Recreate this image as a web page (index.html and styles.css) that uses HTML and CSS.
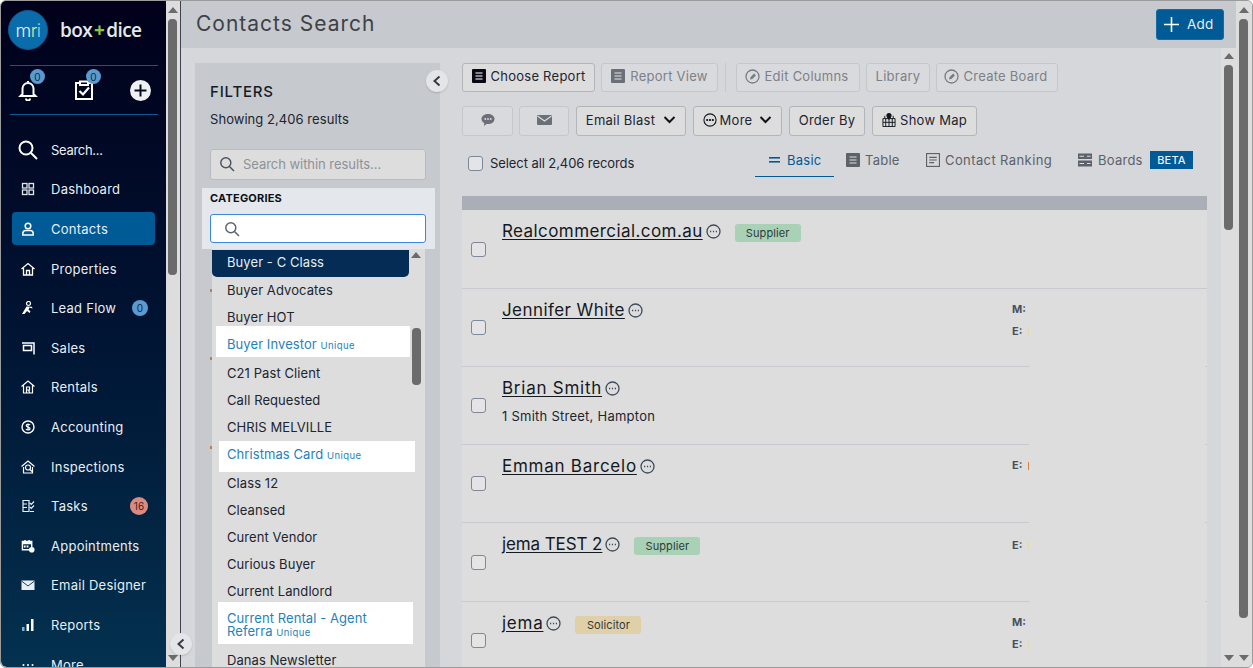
FILE: index.html
```html
<!DOCTYPE html>
<html lang="en">
<head>
<meta charset="utf-8">
<title>Contacts Search</title>
<link rel="stylesheet" href="styles.css">
</head>
<body>
<div class="window">
  <aside class="sidebar">
    <div class="brand">
      <div class="logo"><span class="logo-m">m</span><span class="logo-r">r</span><span class="logo-i">i</span></div>
      <div class="wordmark">box<span class="plus">+</span>dice</div>
    </div>
    <div class="quick">
      <div class="quick-item">
        <svg width="20" height="22" viewBox="0 0 20 22" fill="none" stroke="#fff" stroke-width="2"><path d="M10 2v1M4.500 15V9.500a5.500 5.500 0 0 1 11 0V15l2 2H2.500zM8 19.500a2 2 0 0 0 4 0"/></svg>
        <span class="badge quick-badge">0</span>
      </div>
      <div class="quick-item">
        <svg width="20" height="22" viewBox="0 0 20 22" fill="none" stroke="#fff" stroke-width="2"><path d="M6 4H2v16h16V4h-4M6 2.500h8V6H6z"/><path d="M5.500 12l3.500 3.500 6-7" stroke-width="2.200"/></svg>
        <span class="badge quick-badge">0</span>
      </div>
      <div class="quick-item">
        <svg width="21" height="21" viewBox="0 0 21 21"><circle cx="10.500" cy="10.500" r="10.500" fill="#eef0f2"/><path d="M10.500 4.500v12M4.500 10.500h12" stroke="#0a0a1e" stroke-width="2"/></svg>
      </div>
    </div>
    <nav class="nav">
      <a class="nav-item nav-search"><svg class="nav-icon big" viewBox="0 0 20 20" fill="none" stroke="#fff" stroke-width="2"><circle cx="8" cy="8" r="6.500"/><path d="M12.800 12.800L19 19"/></svg><span>Search...</span></a>
      <a class="nav-item"><svg class="nav-icon" viewBox="0 0 14 14" fill="none" stroke="#dfe6ec" stroke-width="1.300"><rect x="1.500" y="1.500" width="4.500" height="4.500"/><rect x="8" y="1.500" width="4.500" height="4.500"/><rect x="1.500" y="8" width="4.500" height="4.500"/><rect x="8" y="8" width="4.500" height="4.500"/></svg><span>Dashboard</span></a>
      <a class="nav-item active"><svg class="nav-icon" viewBox="0 0 14 14" fill="none" stroke="#fff" stroke-width="1.500"><circle cx="7" cy="4" r="2.800"/><path d="M1.800 13v-1.500A3 3 0 0 1 4.800 8.500h4.400a3 3 0 0 1 3 3V13z"/></svg><span>Contacts</span></a>
      <a class="nav-item"><svg class="nav-icon" viewBox="0 0 14 14" fill="none" stroke="#fff" stroke-width="1.300"><path d="M0.500 7L7 1.500 13.500 7M2.500 6v7h9V6M5.500 13V8.500h3V13"/></svg><span>Properties</span></a>
      <a class="nav-item"><svg class="nav-icon" viewBox="0 0 14 14"><circle cx="7.500" cy="2.500" r="2" fill="none" stroke="#fff" stroke-width="1.200"/><path d="M5.500 5.500L1 13h2.500l2.500-3 2.500 2 1-1.500-2-2 1-2 3 1-.5-1.800z" fill="#fff"/></svg><span>Lead Flow</span><span class="badge nav-badge">0</span></a>
      <a class="nav-item"><svg class="nav-icon" viewBox="0 0 14 14" fill="none" stroke="#fff" stroke-width="1.500"><path d="M1 2h12v11.500M2.500 4.500h8v5h-8z"/></svg><span>Sales</span></a>
      <a class="nav-item"><svg class="nav-icon" viewBox="0 0 14 14" fill="none" stroke="#fff" stroke-width="1.200"><path d="M0.500 6.500L7 1l6.500 5.500M2.500 5.500V13h9V5.500M5.500 13V7h3v3h-3M7.500 10l1.200 3"/></svg><span>Rentals</span></a>
      <a class="nav-item"><svg class="nav-icon" viewBox="0 0 14 14"><circle cx="7" cy="7" r="6" fill="none" stroke="#fff" stroke-width="1.400"/><path d="M9 5c-.5-1-3.800-1.200-3.800.5S9 7 9 8.700 5.500 10 5 9M7 3.500v7" fill="none" stroke="#fff" stroke-width="1.200"/></svg><span>Accounting</span></a>
      <a class="nav-item"><svg class="nav-icon" viewBox="0 0 14 14" fill="none" stroke="#fff" stroke-width="1.200"><path d="M0.500 6.500L7 1l6.500 5.500M2.500 7v6h9V7"/><circle cx="7" cy="7.500" r="2.500"/><path d="M9 9.500l2 2"/></svg><span>Inspections</span></a>
      <a class="nav-item"><svg class="nav-icon" viewBox="0 0 14 14" fill="none" stroke="#e6f0f5" stroke-width="1.200"><path d="M2 1.500h6v11H2zM2 5h4M2 8.500h4M9 4l1.300 1.300L13 2.500M9 8l1.300 1.300L13 6.500M9 12.500h4"/></svg><span>Tasks</span><span class="badge task-badge">16</span></a>
      <a class="nav-item"><svg class="nav-icon" viewBox="0 0 15 15"><path d="M1.500 2.500h10v9h-10z" fill="none" stroke="#fff" stroke-width="1.500"/><path d="M1.500 3h10v2.500h-10zM3.500 1h1.500v2H3.500zM8 1h1.500v2H8zM3 7h2v2H3zM6 7h2v2H6z" fill="#fff"/><circle cx="11.500" cy="11.500" r="3" fill="#fff"/></svg><span>Appointments</span></a>
      <a class="nav-item"><svg class="nav-icon" viewBox="0 0 14 14"><path d="M0.500 2.500h13v9.500H0.500z" fill="#e8eef2"/><path d="M0.500 3l6.500 5 6.500-5" fill="none" stroke="#1a4560" stroke-width="1"/></svg><span>Email Designer</span></a>
      <a class="nav-item"><svg class="nav-icon" viewBox="0 0 14 14" fill="#fff"><rect x="1" y="9" width="2.500" height="4" fill="#6cb5e0"/><rect x="5.500" y="6" width="2.500" height="7"/><rect x="10" y="1" width="2.500" height="12"/></svg><span>Reports</span></a>
      <a class="nav-item"><svg class="nav-icon" viewBox="0 0 14 14" fill="#fff"><circle cx="2.500" cy="7" r="1"/><circle cx="7" cy="7" r="1"/><circle cx="11.500" cy="7" r="1"/></svg><span>More</span></a>
    </nav>
  </aside>
  <div class="track side-track">
    <i class="arrow up"></i><i class="thumb side-thumb"></i><i class="arrow down push"></i>
  </div>
  <button class="collapse side-collapse" aria-label="Collapse"><svg width="10" height="12" viewBox="0 0 10 12" fill="none" stroke="#333c48" stroke-width="2"><path d="M7.500 1.500L2.500 6l5 4.500"/></svg></button>

  <main class="main">
    <header class="page-head">
      <h1>Contacts Search</h1>
      <button class="add"><svg width="15" height="15" viewBox="0 0 15 15" stroke="#fff" stroke-width="1.600"><path d="M7.500 0v15M0 7.500h15"/></svg><span>Add</span></button>
    </header>
    <div class="content">
      <section class="filters">
        <button class="collapse filter-collapse" aria-label="Collapse"><svg width="10" height="12" viewBox="0 0 10 12" fill="none" stroke="#333c48" stroke-width="2"><path d="M7.500 1.500L2.500 6l5 4.500"/></svg></button>
        <h2>FILTERS</h2>
        <p class="count">Showing 2,406 results</p>
        <div class="search-box">
          <svg width="16" height="16" viewBox="0 0 16 16" fill="none" stroke="#4b5563" stroke-width="1.500"><circle cx="6.800" cy="6.800" r="5"/><path d="M10.500 10.500L15 15"/></svg>
          <span>Search within results...</span>
        </div>
        <div class="cat-head">
          <div class="cat-label">CATEGORIES</div>
          <div class="cat-input"><svg width="16" height="16" viewBox="0 0 16 16" fill="none" stroke="#5a6470" stroke-width="1.500"><circle cx="6.800" cy="6.800" r="5"/><path d="M10.500 10.500L15 15"/></svg></div>
        </div>
        <div class="cat-list">
          <div class="cat-selected">Buyer - C Class</div>
          <div class="cat">Buyer Advocates</div>
          <div class="cat">Buyer HOT</div>
          <div class="cat hi hi-investor">Buyer Investor <small>Unique</small></div>
          <div class="cat">C21 Past Client</div>
          <div class="cat">Call Requested</div>
          <div class="cat">CHRIS MELVILLE</div>
          <div class="cat hi hi-card">Christmas Card <small>Unique</small></div>
          <div class="cat">Class 12</div>
          <div class="cat">Cleansed</div>
          <div class="cat">Curent Vendor</div>
          <div class="cat">Curious Buyer</div>
          <div class="cat">Current Landlord</div>
          <div class="cat hi hi-rental">Current Rental - Agent Referra <small>Unique</small></div>
          <div class="cat">Danas Newsletter</div>
          <i class="arrow up list-up"></i><i class="thumb list-thumb"></i>
        </div>
        <i class="speck speck-a"></i><i class="speck speck-b"></i><i class="speck speck-c"></i>
      </section>

      <section class="results">
        <div class="tools tools-one">
          <button class="btn b-choose"><svg class="sq" viewBox="0 0 14 14"><rect width="14" height="14" rx="1" fill="#0a0a14"/><path d="M3.500 4h7M3.500 7h7M3.500 10h7" stroke="#fff" stroke-width="1.200"/></svg>Choose Report</button>
          <button class="btn off b-view"><svg class="sq" viewBox="0 0 14 14"><rect width="14" height="14" rx="1" fill="#6b7078"/><path d="M3.500 4h7M3.500 7h7M3.500 10h7" stroke="#e4e4e4" stroke-width="1.200"/></svg>Report View</button>
          <i class="sep"></i>
          <button class="btn off b-edit"><svg class="sq circ" viewBox="0 0 15 15" fill="none" stroke="#777c84" stroke-width="1.300"><circle cx="7.500" cy="7.500" r="6.500"/><path d="M5 10.500l.6-2.400 3.500-3.500 1.800 1.800-3.500 3.500z" fill="#777c84" stroke="none"/></svg>Edit Columns</button>
          <button class="btn off b-library">Library</button>
          <button class="btn off b-board"><svg class="sq circ" viewBox="0 0 15 15" fill="none" stroke="#777c84" stroke-width="1.300"><circle cx="7.500" cy="7.500" r="6.500"/><path d="M5 10.500l.6-2.400 3.500-3.500 1.800 1.800-3.500 3.500z" fill="#777c84" stroke="none"/></svg>Create Board</button>
        </div>
        <div class="tools tools-two">
          <button class="btn off b-chat" aria-label="Comment"><svg width="14" height="14" viewBox="0 0 14 14"><path d="M7 1c3.500 0 6.500 2 6.500 5S10.500 11 7 11c-.6 0-1 0-1.500-.1L3 13l.2-3C1.500 9.200.5 7.800.5 6 .5 3 3.500 1 7 1z" fill="#6b7078"/><circle cx="4.300" cy="6" r=".9" fill="#ddd"/><circle cx="7" cy="6" r=".9" fill="#ddd"/><circle cx="9.700" cy="6" r=".9" fill="#ddd"/></svg></button>
          <button class="btn off b-mail" aria-label="Email"><svg width="15" height="12" viewBox="0 0 15 12"><rect y="1" width="15" height="10" rx="1" fill="#6b7078"/><path d="M.5 2l7 5 7-5" fill="none" stroke="#ddd" stroke-width="1.100"/></svg></button>
          <button class="btn b-blast">Email Blast<svg class="chev" viewBox="0 0 12 8" fill="none" stroke="#10151c" stroke-width="2"><path d="M1 1l5 5 5-5"/></svg></button>
          <button class="btn b-more"><svg class="sq" viewBox="0 0 15 15" fill="none" stroke="#10151c" stroke-width="1.200"><circle cx="7.500" cy="7.500" r="6.500"/><circle cx="4.500" cy="7.500" r=".6" fill="#10151c"/><circle cx="7.500" cy="7.500" r=".6" fill="#10151c"/><circle cx="10.500" cy="7.500" r=".6" fill="#10151c"/></svg>More<svg class="chev" viewBox="0 0 12 8" fill="none" stroke="#10151c" stroke-width="2"><path d="M1 1l5 5 5-5"/></svg></button>
          <button class="btn b-order">Order By</button>
          <button class="btn b-map"><svg class="sq" viewBox="0 0 15 15" fill="none" stroke="#10151c" stroke-width="1"><path d="M1 6h13v8.500H1zM1 10h13M4 6v8.500M7.500 6v8.500M11 6v8.500M3 6V3M12 6V3"/><path d="M7.500 0a2.800 2.800 0 0 1 2.800 2.800C10.300 4.800 7.500 7.500 7.500 7.500S4.700 4.800 4.700 2.800A2.800 2.800 0 0 1 7.500 0z" fill="#10151c" stroke="none"/></svg>Show Map</button>
        </div>
        <div class="select-row">
          <label class="select-all"><i class="check"></i>Select all 2,406 records</label>
          <div class="tabs">
            <a class="tab t-basic active"><svg class="tab-icon small" viewBox="0 0 11 6" fill="#005a96"><rect width="11" height="1.600"/><rect y="4" width="11" height="1.600"/></svg>Basic</a>
            <a class="tab t-table"><svg class="tab-icon" viewBox="0 0 14 14"><rect width="14" height="14" rx="1" fill="#5d6168"/><path d="M3.500 4h7M3.500 7h7M3.500 10h7" stroke="#ddd" stroke-width="1.100"/></svg>Table</a>
            <a class="tab t-rank"><svg class="tab-icon" viewBox="0 0 13 13" fill="none" stroke="#5d6168" stroke-width="1.100"><rect x=".5" y=".5" width="12" height="12"/><path d="M3 4h7M3 6.500h7M3 9h4.500"/></svg>Contact Ranking</a>
            <a class="tab t-boards"><svg class="tab-icon" viewBox="0 0 14 13"><path d="M0 0h14v5.500H0zM0 7h14v6H0z" fill="#5d6168"/><path d="M1.500 2.700H6M9 2.700h3.500M1.500 10H6M9 10h3.500" stroke="#ddd" stroke-width="1.100"/></svg>Boards<b class="beta">BETA</b></a>
          </div>
        </div>
        <div class="grey-bar"></div>
        <div class="rows">
          <article class="row row-tall">
            <i class="check"></i>
            <div class="row-main">
              <div class="name-line"><a class="name">Realcommercial.com.au</a><svg class="dots" viewBox="0 0 15 15" fill="none" stroke="#3f4c5c" stroke-width="1.300"><circle cx="7.500" cy="7.500" r="6.500"/><path d="M4 7.500h1.200M6.900 7.500h1.200M9.800 7.500H11" stroke-width="1.400"/></svg><span class="tag green">Supplier</span></div>
            </div>
            <div class="row-fields"></div>
          </article>
          <article class="row">
            <i class="check"></i>
            <div class="row-main">
              <div class="name-line"><a class="name">Jennifer White</a><svg class="dots" viewBox="0 0 15 15" fill="none" stroke="#3f4c5c" stroke-width="1.300"><circle cx="7.500" cy="7.500" r="6.500"/><path d="M4 7.500h1.200M6.900 7.500h1.200M9.800 7.500H11" stroke-width="1.400"/></svg></div>
            </div>
            <div class="row-fields"><div class="field">M:</div><div class="field">E:<i class="mark pale"></i></div></div>
          </article>
          <article class="row">
            <i class="check"></i>
            <div class="row-main">
              <div class="name-line"><a class="name name-wide">Brian Smith</a><svg class="dots" viewBox="0 0 15 15" fill="none" stroke="#3f4c5c" stroke-width="1.300"><circle cx="7.500" cy="7.500" r="6.500"/><path d="M4 7.500h1.200M6.900 7.500h1.200M9.800 7.500H11" stroke-width="1.400"/></svg></div>
              <p class="address">1 Smith Street, Hampton</p>
            </div>
            <div class="row-fields"></div>
          </article>
          <article class="row">
            <i class="check"></i>
            <div class="row-main">
              <div class="name-line"><a class="name name-wide">Emman Barcelo</a><svg class="dots" viewBox="0 0 15 15" fill="none" stroke="#3f4c5c" stroke-width="1.300"><circle cx="7.500" cy="7.500" r="6.500"/><path d="M4 7.500h1.200M6.900 7.500h1.200M9.800 7.500H11" stroke-width="1.400"/></svg></div>
            </div>
            <div class="row-fields"><div class="field">E:<i class="mark strong"></i></div></div>
          </article>
          <article class="row row-tall">
            <i class="check"></i>
            <div class="row-main">
              <div class="name-line"><a class="name name-tight">jema TEST 2</a><svg class="dots" viewBox="0 0 15 15" fill="none" stroke="#3f4c5c" stroke-width="1.300"><circle cx="7.500" cy="7.500" r="6.500"/><path d="M4 7.500h1.200M6.900 7.500h1.200M9.800 7.500H11" stroke-width="1.400"/></svg><span class="tag green">Supplier</span></div>
            </div>
            <div class="row-fields row-fields-low"><div class="field">E:<i class="mark pale"></i></div></div>
          </article>
          <article class="row">
            <i class="check"></i>
            <div class="row-main">
              <div class="name-line"><a class="name name-wide">jema</a><svg class="dots" viewBox="0 0 15 15" fill="none" stroke="#3f4c5c" stroke-width="1.300"><circle cx="7.500" cy="7.500" r="6.500"/><path d="M4 7.500h1.200M6.900 7.500h1.200M9.800 7.500H11" stroke-width="1.400"/></svg><span class="tag sand">Solicitor</span></div>
            </div>
            <div class="row-fields"><div class="field">M:</div><div class="field">E:<i class="mark pale"></i></div></div>
          </article>
        </div>
        <div class="row-mask"></div>
      </section>

      <div class="track inner-track">
        <i class="arrow up"></i><i class="thumb inner-thumb"></i><i class="arrow down push"></i>
      </div>
    </div>
  </main>
  <div class="track outer-track">
    <i class="arrow up"></i><i class="thumb outer-thumb"></i><i class="arrow down push"></i>
  </div>
</div>
</body>
</html>
```

FILE: styles.css
```css
* { box-sizing: border-box; }
html, body { margin: 0; height: 100%; overflow: hidden; }
body { font-family: "Inter", "Liberation Sans", sans-serif; font-size: 13px; letter-spacing: .25px; color: #1c2530; }
svg { display: block; flex: none; }
i { display: block; }
button { font: inherit; letter-spacing: inherit; }

.window { position: relative; display: flex; width: 1253px; height: 668px; border: 1px solid #9b9b9b; border-radius: 6px; overflow: hidden; background: #d5d7db; }

/* sidebar */
.sidebar { width: 165px; flex: none; height: 100%; overflow: hidden; background: linear-gradient(#00001a, #001433 50%, #03314f); color: #e8eef3; border-bottom-left-radius: 6px; }
.brand { display: flex; align-items: flex-start; height: 64px; padding: 9px 0 0 7px; }
.logo { width: 40px; height: 40px; border-radius: 50%; background: #0b6cab; border: 1px solid #12588a; display: flex; align-items: center; justify-content: center; font-size: 18px; font-weight: 300; color: #e6f1f8; letter-spacing: -.4px; }
.logo-r { color: #d6e7a4; }
.logo-i { color: #9ad6ec; }
.wordmark { margin-left: 12px; font-family: "Open Sans", sans-serif; font-weight: 600; font-size: 19px; line-height: 40px; letter-spacing: -.6px; color: #e6e8ea; }
.plus { color: #8dc63f; font-weight: 700; margin: 0 2px; }
.quick { display: flex; align-items: center; justify-content: space-between; height: 50px; margin: 0 8px 0 9px; padding: 0 7px 0 8px; border-top: 1px solid #0b5a94; border-bottom: 1px solid #0b5a94; }
.quick-item { position: relative; }
.badge { display: flex; align-items: center; justify-content: center; border-radius: 50%; background: #5b9ad0; color: #0e2a44; font-size: 10px; letter-spacing: 0; }
.quick-badge { position: absolute; top: -10px; left: 12px; width: 15px; height: 15px; }
.nav { padding: 18.300px 11px 0 11px; }
.nav-item { display: flex; align-items: center; height: 33px; margin-bottom: 6.600px; padding: 0 8px 0 9px; border-radius: 4px; font-size: 13px; }
.nav-item > span:first-of-type { margin-left: 16px; }
.nav-search { letter-spacing: -.3px; }
.nav-icon { width: 14px; height: 14px; }
.nav-icon.big { width: 20px; height: 20px; margin: 0 -3px 0 -3px; }
.nav-item.active { background: #005a96; }
.nav-badge { width: 16px; height: 16px; margin-left: auto; margin-right: -1px; }
.task-badge { width: 18px; height: 18px; margin-left: auto; margin-right: -1px; background: #d98b80; color: #4a1c14; }

/* scrollbars */
.track { display: flex; flex-direction: column; align-items: center; flex: none; background: #dddddd; }
.side-track { width: 15px; height: 100%; padding: 6px 1px 6px 0; border-right: 1px solid #3d4450; }
.outer-track { width: 16px; padding: 6px 1px 6px 0; }
.inner-track { width: 15px; padding: 5px 0 6px; }
.arrow { width: 0; height: 0; border-left: 5px solid transparent; border-right: 5px solid transparent; flex: none; }
.arrow.up { border-bottom: 6px solid #6b6b6b; }
.arrow.down { border-top: 6px solid #6b6b6b; }
.push { margin-top: auto; }
.thumb { width: 9px; background: #6b6b6b; border-radius: 4px; flex: none; margin-top: 6px; }
.side-thumb { height: 256px; }
.outer-thumb { height: 599px; }
.inner-thumb { height: 165px; margin-top: 6px; }

.collapse { display: flex; align-items: center; justify-content: center; position: absolute; width: 22px; height: 22px; padding: 0; border: 0; border-radius: 50%; background: #e3e5e8; box-shadow: 0 1px 2px rgba(0,0,0,.15); z-index: 5; }
.side-collapse { left: 169px; top: 632px; }
.filter-collapse { left: 231px; top: 7px; }

/* main */
.main { flex: 1; min-width: 0; display: flex; flex-direction: column; }
.page-head { display: flex; align-items: center; justify-content: space-between; flex: none; height: 47px; padding: 0 12px 0 15px; background: #c6c9ce; }
h1 { margin: 0 0 3px; font-size: 21px; font-weight: 400; letter-spacing: 1px; color: #3d4248; }
.add { display: flex; align-items: center; gap: 8px; width: 68px; height: 31px; padding: 0 0 2px 7px; border: 1px solid #1a6aa0; border-radius: 3px; background: #005a96; color: #e8eef4; font-size: 13.500px; }
.add svg { margin-top: 2px; }
.content { flex: 1; min-height: 0; display: flex; overflow: hidden; padding-left: 14px; }

/* filters */
.filters { position: relative; width: 245px; flex: none; margin-top: 15px; padding: 20px 0 0 15px; background: #c6c9ce; }
h2 { margin: 0; font-size: 15px; font-weight: 500; letter-spacing: .8px; line-height: 18px; color: #151c26; }
.count { margin: 9px 0 0; line-height: 18px; letter-spacing: .05px; }
.search-box { display: flex; align-items: center; gap: 8px; width: 216px; height: 31px; margin-top: 21px; padding: 0 0 2px 8px; background: #dddddd; border: 1px solid #b8bbc0; border-radius: 3px; color: #8e9298; letter-spacing: -.05px; }
.cat-head { width: 233px; height: 61px; margin: 8px 0 0 -8px; padding: 4px 0 0 8px; background: #e4e7ec; }
.cat-label { font-size: 11px; font-weight: 700; letter-spacing: .2px; line-height: 13px; color: #0c1116; }
.cat-input { display: flex; align-items: center; width: 216px; height: 29px; margin-top: 9px; padding-left: 13px; background: #fff; border: 1px solid #3d86e0; border-radius: 3px; }
.cat-list { position: relative; width: 213px; height: 419px; margin-left: 2px; padding-top: 1px; background: #dddddd; overflow: hidden; letter-spacing: .08px; }
.cat-selected { width: 197px; height: 27px; padding-left: 15px; line-height: 25px; border-radius: 0 0 5px 5px; background: #042c55; color: #e6ecf2; }
.cat { height: 27px; padding-left: 15px; line-height: 27px; white-space: nowrap; }
.hi { background: #fff; color: #1f82b8; line-height: 26px; }
.hi small { font-size: 9.500px; letter-spacing: .4px; }
.hi-investor { width: 194px; height: 31px; margin: -5px 0 2.500px 4px; padding: 5px 0 0 11px; }
.hi-card { width: 196px; height: 31px; margin: 0 0 -1.500px 7px; padding-left: 8px; }
.hi-rental { width: 195px; height: 42px; margin: -3.500px 0 3.500px 6px; padding: 10px 20px 0 9px; line-height: 13px; white-space: normal; }
.list-up { position: absolute; left: 199px; top: 3px; }
.list-thumb { position: absolute; left: 200px; top: 79px; height: 57px; margin: 0; }
.speck { position: absolute; left: 15px; width: 2px; height: 3px; background: #d07a3c; }
.speck-a { top: 226px; }
.speck-b { top: 294px; }
.speck-c { top: 383px; }

/* results */
.results { position: relative; width: 745px; flex: none; margin: 15px 14px 0 22px; }
.tools { display: flex; gap: 6px; }
.tools-one { height: 29px; }
.tools-two { height: 30px; margin-top: 14px; gap: 7px; }
.btn { display: flex; align-items: center; justify-content: center; gap: 5px; height: 100%; padding: 0; background: #dddddd; border: 1px solid #b2b5ba; border-radius: 3px; color: #1c2530; white-space: nowrap; }
.tools-one .btn { padding-bottom: 3px; }
.tools-two .btn { padding-bottom: 2px; }
.btn.off { background: #d9dadd; border-color: #c5c7cb; color: #7d8187; }
.sq { width: 14px; height: 14px; }
.sq.circ { width: 15px; height: 15px; margin-left: -3px; }
.chev { width: 13px; height: 8px; margin-left: 4px; }
.sep { width: 1px; height: 29px; margin: 0 4px 0 1px; background: #c5c7cb; }
.b-choose { width: 133px; }
.b-view { width: 117px; }
.b-edit { width: 124px; }
.b-library { width: 64px; }
.b-board { width: 122px; }
.b-chat { width: 51px; margin-right: -1px; }
.b-mail { width: 50px; }
.b-blast { width: 110px; gap: 4px; }
.b-more { width: 89px; gap: 3px; }
.b-order { width: 76px; }
.b-map { width: 105px; gap: 4px; }
.select-row { display: flex; align-items: flex-start; justify-content: space-between; height: 42px; padding: 0 14px 0 6px; }
.select-all { display: flex; align-items: center; gap: 7px; margin-top: 19px; height: 16px; letter-spacing: -.08px; }
.check { flex: none; width: 15px; height: 15px; background: #e4e4e6; border: 1px solid #7e8896; border-radius: 3px; }
.tabs { display: flex; height: 41px; }
.tab { display: flex; align-items: center; height: 41px; padding-top: 7px; color: #5d6168; white-space: nowrap; }
.tab.active { color: #005a96; border-bottom: 1px solid #005a96; padding-top: 8px; }
.tab-icon { width: 14px; height: 14px; margin-right: 5px; }
.tab-icon.small { width: 11px; height: 6px; margin: 0 7px 0 14px; }
.t-basic { width: 79px; }
.t-table { width: 54px; margin-left: 12px; }
.t-rank { width: 126px; margin-left: 26px; letter-spacing: .4px; }
.t-boards { width: 115px; margin-left: 26px; }
.t-boards .tab-icon { margin-right: 6px; }
.beta { display: flex; align-items: center; justify-content: center; width: 43px; height: 18px; margin-left: auto; background: #005a96; color: #e8eef4; font-size: 11px; font-weight: 500; letter-spacing: .2px; }
.grey-bar { height: 14px; margin-top: 18px; background: #a9aeb7; }
.row { display: flex; align-items: flex-start; height: 78px; background: #dddddd; border-bottom: 1px solid #c8cad0; }
.row-tall { height: 79px; }
.row > .check { margin: 31px 16px 0 9px; }
.row-tall > .check { margin-top: 32px; }
.row-main { flex: 1; min-width: 0; padding-top: 10px; }
.name-line { display: flex; align-items: center; height: 22px; }
.name { font-size: 17px; font-weight: 400; letter-spacing: .42px; color: #14191f; text-decoration: underline; text-underline-offset: 2px; white-space: nowrap; }
.name-wide { letter-spacing: .75px; }
.name-tight { letter-spacing: -.1px; }
.dots { width: 15px; height: 15px; margin-left: 3px; }
.tag { display: flex; align-items: center; justify-content: center; width: 66px; height: 18px; margin: 4px 0 0 14px; border-radius: 3px; font-size: 11px; letter-spacing: .1px; color: #2d3a40; }
.green { background: #a8d1b5; }
.sand { background: #e0d0a8; }
.address { margin: 8px 0 0; line-height: 18px; }
.row-fields { width: 195px; flex: none; padding-top: 9px; }
.row-fields-low { padding-top: 11px; }
.field { position: relative; height: 22px; font-size: 11px; font-weight: 700; letter-spacing: 0; line-height: 22px; color: #46505e; }
.mark { position: absolute; left: 16px; top: 8px; width: 1px; height: 8px; }
.mark.pale { background: #e6d9a8; }
.mark.strong { background: #d9813c; }
.row-mask { position: absolute; left: 567px; top: 226px; width: 176px; height: 400px; background: #dddddd; }
```
